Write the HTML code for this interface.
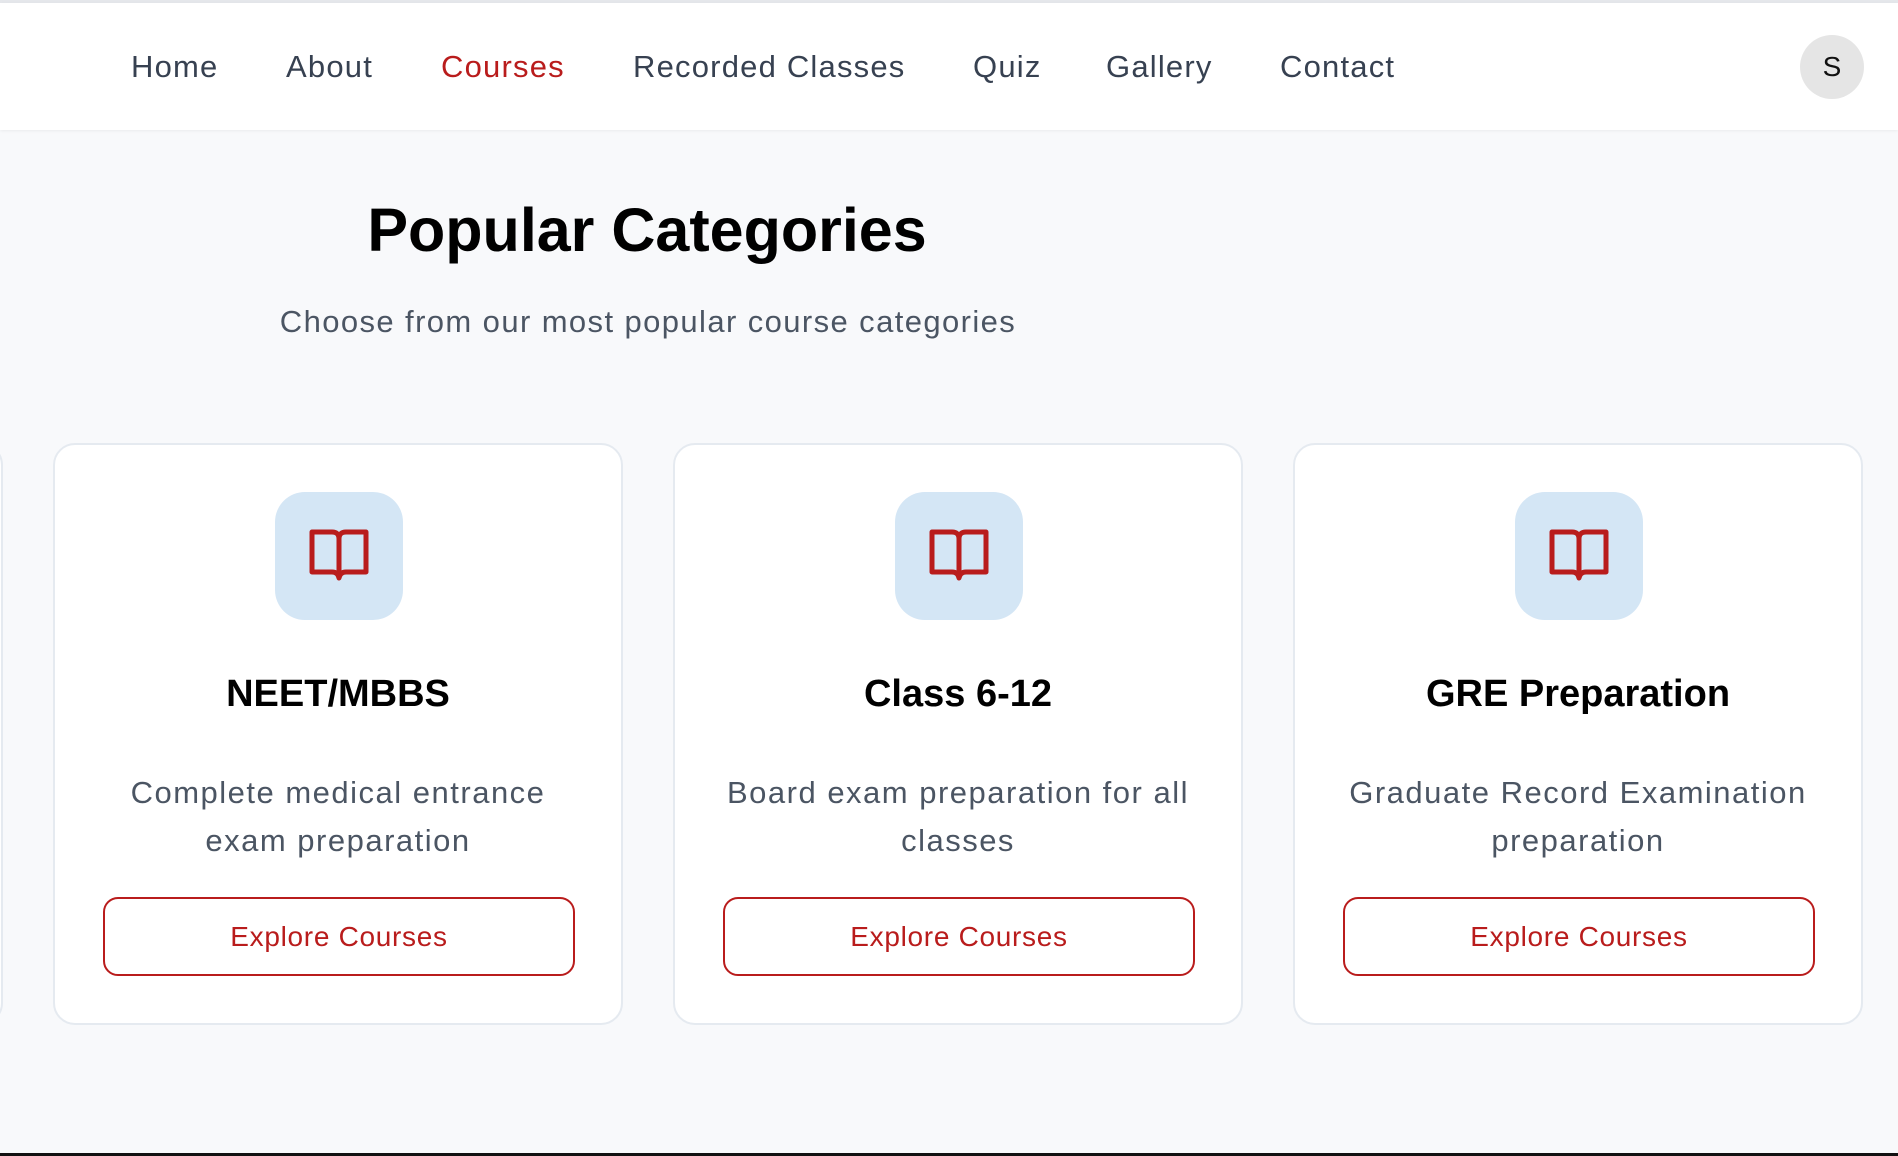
<!DOCTYPE html>
<html><head><meta charset="utf-8"><style>
*{margin:0;padding:0;box-sizing:border-box}
html,body{width:1898px;height:1156px;overflow:hidden}
body{background:#f8f9fb;font-family:"Liberation Sans",sans-serif;position:relative}
.top{position:absolute;left:0;top:0;width:1898px;height:3px;background:#e5e7eb}
.nav{position:absolute;left:0;top:3px;width:1898px;height:127px;background:#fff;box-shadow:0 1px 3px rgba(0,0,0,.06)}
.nav a{position:absolute;top:44px;font-size:31px;letter-spacing:1.2px;color:#374151;text-decoration:none;line-height:40px}
.av{position:absolute;left:1800px;top:32px;width:64px;height:64px;border-radius:50%;background:#e5e5e5;font-size:28px;line-height:64px;text-align:center;color:#111}
h1{position:absolute;left:0;width:1294px;top:194px;text-align:center;font-size:61px;font-weight:bold;color:#000;line-height:72px}
.sub{position:absolute;left:0;width:1296px;top:302px;text-align:center;font-size:31px;letter-spacing:1.4px;color:#4b5563;line-height:40px}
.card{position:absolute;top:443px;width:570px;height:582px;background:#fff;border:2px solid #e5eaf0;border-radius:22px}
.ib{position:absolute;left:220px;top:47px;width:128px;height:128px;border-radius:30px;background:#d4e6f5}
.ib svg{position:absolute;left:33px;top:35px}
.t{position:absolute;left:0;width:100%;top:224px;text-align:center;font-size:38px;font-weight:bold;color:#000;line-height:50px}
.d{position:absolute;left:0;width:100%;top:324px;text-align:center;font-size:31px;letter-spacing:1.5px;color:#4b5563;line-height:48px}
.b{position:absolute;left:48px;top:452px;width:472px;height:79px;border:2px solid #b91c1c;border-radius:15px;text-align:center;font-size:28px;letter-spacing:0.7px;line-height:75px;color:#b91c1c}
.bot{position:absolute;left:0;top:1153px;width:1898px;height:3px;background:#111}
</style></head><body>
<div class="top"></div>
<div class="nav">
<a style="left:131px">Home</a>
<a style="left:286px">About</a>
<a style="left:441px;color:#b91c1c">Courses</a>
<a style="left:633px">Recorded Classes</a>
<a style="left:973px">Quiz</a>
<a style="left:1106px">Gallery</a>
<a style="left:1280px">Contact</a>
<div class="av">S</div>
</div>
<h1>Popular Categories</h1>
<div class="sub">Choose from our most popular course categories</div>
<div class="card" style="left:-567px"></div>
<div class="card" style="left:53px"><div class="ib"><svg width="62" height="58" viewBox="0 0 62 58"><path d="M4 5 H24 Q31 5 31 12 Q31 5 38 5 H58 V45 H38 Q32 45 31 51 Q30 45 24 45 H4 Z M31 12 V51" fill="none" stroke="#b91c1c" stroke-width="5" stroke-linejoin="round"/></svg></div><div class="t">NEET/MBBS</div><div class="d">Complete medical entrance<br>exam preparation</div><div class="b">Explore Courses</div></div>
<div class="card" style="left:673px"><div class="ib"><svg width="62" height="58" viewBox="0 0 62 58"><path d="M4 5 H24 Q31 5 31 12 Q31 5 38 5 H58 V45 H38 Q32 45 31 51 Q30 45 24 45 H4 Z M31 12 V51" fill="none" stroke="#b91c1c" stroke-width="5" stroke-linejoin="round"/></svg></div><div class="t">Class 6-12</div><div class="d">Board exam preparation for all<br>classes</div><div class="b">Explore Courses</div></div>
<div class="card" style="left:1293px"><div class="ib"><svg width="62" height="58" viewBox="0 0 62 58"><path d="M4 5 H24 Q31 5 31 12 Q31 5 38 5 H58 V45 H38 Q32 45 31 51 Q30 45 24 45 H4 Z M31 12 V51" fill="none" stroke="#b91c1c" stroke-width="5" stroke-linejoin="round"/></svg></div><div class="t">GRE Preparation</div><div class="d">Graduate Record Examination<br>preparation</div><div class="b">Explore Courses</div></div>
<div class="bot"></div>
</body></html>
